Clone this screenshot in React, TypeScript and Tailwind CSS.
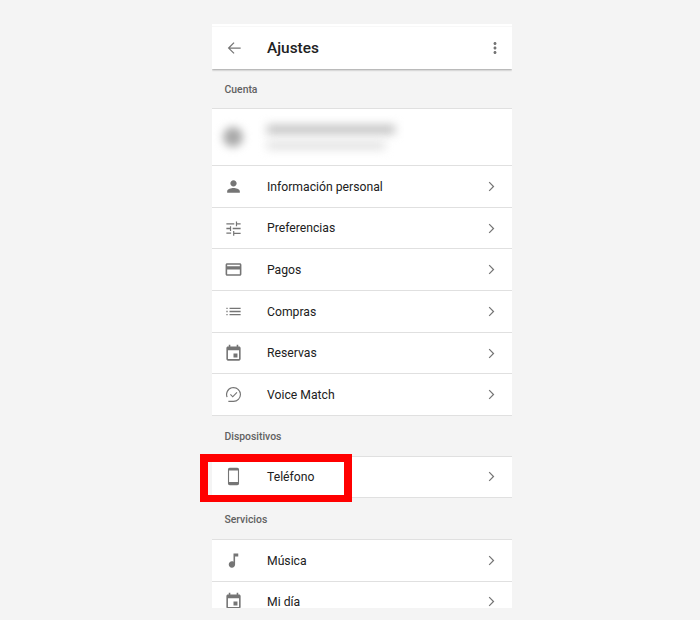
import React from 'react';

const paths = {
  person: 'M12 12c2.21 0 4-1.79 4-4s-1.79-4-4-4-4 1.79-4 4 1.79 4 4 4zm0 2c-2.67 0-8 1.34-8 4v2h16v-2c0-2.66-5.33-4-8-4z',
  tune: 'M3 17v1.5h6V17H3zM3 5.5V7h10V5.5H3zm10 15.5v-2h8v-1.5h-8V15h-1.5v6H13zM7.5 9v2.2H3v1.6h4.5V15H9V9H7.5zM21 12.8v-1.6H11v1.6h10zM15 9h1.5V7H21V5.5h-4.5V3H15v6z',
  card: 'M20 4H4c-1.11 0-1.99.89-1.99 2L2 18c0 1.11.89 2 2 2h16c1.11 0 2-.89 2-2V6c0-1.11-.89-2-2-2zm0 14H4v-6h16v6zm0-10H4V6h16v2z',
  list: 'M3 12.8h1.6v-1.6H3v1.6zm0 4h1.6v-1.6H3v1.6zm0-8h1.6V7.2H3v1.6zm4 4h14v-1.6H7v1.6zm0 4h14v-1.6H7v1.6zM7 7.2v1.6h14V7.2H7z',
  event: 'M17 12h-5v5h5v-5zM16 1v2H8V1H6v2H5c-1.11 0-1.99.9-1.99 2L3 19c0 1.1.89 2 2 2h14c1.1 0 2-.9 2-2V5c0-1.1-.9-2-2-2h-1V1h-2zm3 18H5V8h14v11z',
  phone: 'M16.8 1H7.2C6 1 5 2 5 3.2v17.6C5 22 6 23 7.2 23h9.6c1.2 0 2.2-1 2.2-2.2V3.2C19 2 18 1 16.8 1zm.8 18H6.4V4.5h11.2V19z',
  music: 'M12 3v10.55c-.59-.34-1.27-.55-2-.55-2.21 0-4 1.79-4 4s1.79 4 4 4 4-1.79 4-4V7h4V3h-6z',
  voice: 'M12 2.5a9.5 9.5 0 0 1 0 19H5.5V20H12a8 8 0 1 0-7.4-5l-1.4.6A9.5 9.5 0 0 1 12 2.5zm3.9 6.4 1 1-5.9 5.9-3.4-3.4 1-1 2.4 2.4z',
};

const Icon = ({ d }: { d: string }) => (
  <svg viewBox="0 0 24 24" fill="#757575" className="w-[19px] h-[19px]">
    <path d={d} />
  </svg>
);

const Row = ({ icon, label }: { icon: string; label: string }) => (
  <div className="flex items-center h-[41.7px] shrink-0 bg-white border-b border-[#e0e0e0]">
    <div className="w-[55px] pl-[12px] shrink-0">
      <Icon d={icon} />
    </div>
    <span className="flex-1 text-[12.2px] pt-[1px] text-[#212121]">{label}</span>
    <svg viewBox="0 0 24 24" fill="#757575" className="w-[19px] h-[19px] mr-[11.5px]">
      <path d="M9.6 6 8.5 7.1 13.4 12l-4.9 4.9L9.6 18l6-6z" />
    </svg>
  </div>
);

const Section = ({ title, className }: { title: string; className: string }) => (
  <div className={`flex items-center px-[12.5px] shrink-0 border-b border-[#e0e0e0] text-[10.4px] font-medium text-[#616161] ${className}`}>
    {title}
  </div>
);

export default function App() {
  return (
    <div className="w-[700px] h-[620px] bg-[#f4f4f4] pt-[24px] relative" style={{ fontFamily: 'Roboto, sans-serif' }}>
      <div className="w-[300px] h-[584px] ml-[212px] overflow-hidden flex flex-col">
        <div className="h-[45px] shrink-0 bg-white shadow-[0_1px_2px_rgba(0,0,0,0.35)] relative pt-[2px]">
          <div className="flex items-center h-[43px] pt-[1px] border-t border-[#f8f8f8]">
            <div className="w-[55px] pl-[11.5px] shrink-0 -mt-[2px]">
              <svg viewBox="0 0 24 24" fill="#757575" className="w-5 h-5">
                <path d="M20 11.25H7.3l5.3-5.3L11.5 5 4.5 12l7 7 1.1-1-5.3-5.25H20z" />
              </svg>
            </div>
            <span className="flex-1 text-[15.4px] font-medium text-[#212121]">Ajustes</span>
            <svg viewBox="0 0 24 24" fill="#757575" className="w-[18px] h-[18px] mr-[8px] -mt-[2px]">
              <path d="M12 8c1.1 0 2-.9 2-2s-.9-2-2-2-2 .9-2 2 .9 2 2 2zm0 2c-1.1 0-2 .9-2 2s.9 2 2 2 2-.9 2-2-.9-2-2-2zm0 6c-1.1 0-2 .9-2 2s.9 2 2 2 2-.9 2-2-.9-2-2-2z" />
            </svg>
          </div>
        </div>

        <Section title="Cuenta" className="h-[40px] pt-[3px]" />

        {/* account row, blurred out in the picture */}
        <div className="flex items-center h-[57px] shrink-0 bg-white border-b border-[#e0e0e0]">
          <div className="w-[55px] pl-[11px] shrink-0">
            <div className="w-[20px] h-[20px] rounded-full bg-[#a8a8a8] blur-[4px]" />
          </div>
          <div className="flex flex-col gap-[8px]">
            <div className="w-[128px] h-[9px] bg-[#c0c0c0] blur-[5px]" />
            <div className="w-[118px] h-[7px] bg-[#dcdcdc] blur-[5px]" />
          </div>
        </div>

        <Row icon={paths.person} label="Información personal" />
        <Row icon={paths.tune} label="Preferencias" />
        <Row icon={paths.card} label="Pagos" />
        <Row icon={paths.list} label="Compras" />
        <Row icon={paths.event} label="Reservas" />
        <Row icon={paths.voice} label="Voice Match" />

        <Section title="Dispositivos" className="h-[40.5px] pt-[2px]" />
        <Row icon={paths.phone} label="Teléfono" />
        <Section title="Servicios" className="h-[41.5px] pt-[2px]" />
        <Row icon={paths.music} label="Música" />
        <Row icon={paths.event} label="Mi día" />
      </div>

      {/* red highlight drawn over the screenshot */}
      <div className="absolute left-[200px] top-[454px] w-[152px] h-[48px] border-[8px] border-b-[7px] border-[#ff0000]" />
    </div>
  );
}
